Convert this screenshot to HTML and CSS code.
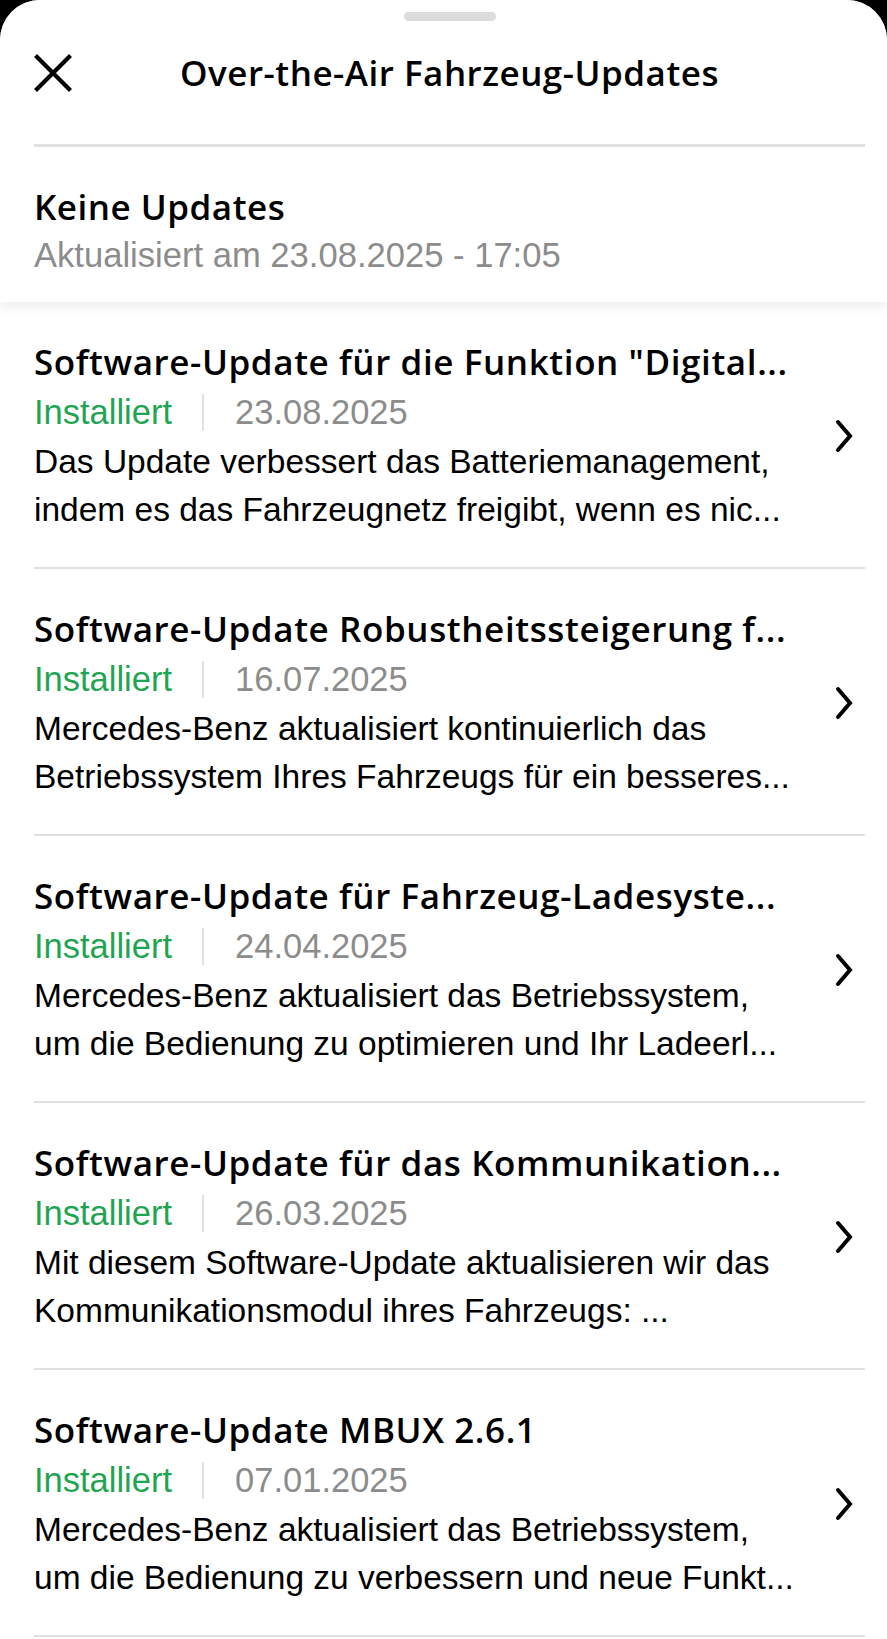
FILE: index.html
```html
<!DOCTYPE html>
<html lang="de">
<head>
<meta charset="utf-8">
<title>Over-the-Air Fahrzeug-Updates</title>
<link rel="stylesheet" href="styles.css">
</head>
<body>
<div class="sheet">
  <header class="header">
    <div class="handle"></div>
    <div class="nav">
      <button class="close" aria-label="Schließen">
        <svg width="38" height="38" viewBox="0 0 38 38"><path d="M3 3 L35 35 M35 3 L3 35" stroke="#000" stroke-width="4.2" stroke-linecap="square" fill="none"/></svg>
      </button>
      <h1 class="nav-title">Over-the-Air Fahrzeug-Updates</h1>
      <span class="nav-spacer"></span>
    </div>
    <div class="divider"></div>
    <div class="status">
      <div class="status-title">Keine Updates</div>
      <div class="status-sub">Aktualisiert am 23.08.2025 - 17:05</div>
    </div>
  </header>

  <ul class="list">
    <li class="item">
      <div class="item-text">
        <div class="item-title">Software-Update für die Funktion "Digital...</div>
        <div class="item-meta"><span class="state">Installiert</span><span class="sep"></span><span class="date">23.08.2025</span></div>
        <div class="item-desc"><span>Das Update verbessert das Batteriemanagement,</span><span>indem es das Fahrzeugnetz freigibt, wenn es nic...</span></div>
      </div>
      <svg class="chev" width="18" height="34" viewBox="0 0 18 34"><path d="M3 3 L15 17 L3 31" stroke="#000" stroke-width="4" fill="none" stroke-linecap="round" stroke-linejoin="miter"/></svg>
    </li>
    <li class="item">
      <div class="item-text">
        <div class="item-title">Software-Update Robustheitssteigerung f...</div>
        <div class="item-meta"><span class="state">Installiert</span><span class="sep"></span><span class="date">16.07.2025</span></div>
        <div class="item-desc"><span>Mercedes-Benz aktualisiert kontinuierlich das</span><span>Betriebssystem Ihres Fahrzeugs für ein besseres...</span></div>
      </div>
      <svg class="chev" width="18" height="34" viewBox="0 0 18 34"><path d="M3 3 L15 17 L3 31" stroke="#000" stroke-width="4" fill="none" stroke-linecap="round" stroke-linejoin="miter"/></svg>
    </li>
    <li class="item">
      <div class="item-text">
        <div class="item-title">Software-Update für Fahrzeug-Ladesyste...</div>
        <div class="item-meta"><span class="state">Installiert</span><span class="sep"></span><span class="date">24.04.2025</span></div>
        <div class="item-desc"><span>Mercedes-Benz aktualisiert das Betriebssystem,</span><span>um die Bedienung zu optimieren und Ihr Ladeerl...</span></div>
      </div>
      <svg class="chev" width="18" height="34" viewBox="0 0 18 34"><path d="M3 3 L15 17 L3 31" stroke="#000" stroke-width="4" fill="none" stroke-linecap="round" stroke-linejoin="miter"/></svg>
    </li>
    <li class="item">
      <div class="item-text">
        <div class="item-title">Software-Update für das Kommunikation...</div>
        <div class="item-meta"><span class="state">Installiert</span><span class="sep"></span><span class="date">26.03.2025</span></div>
        <div class="item-desc"><span>Mit diesem Software-Update aktualisieren wir das</span><span>Kommunikationsmodul ihres Fahrzeugs: ...</span></div>
      </div>
      <svg class="chev" width="18" height="34" viewBox="0 0 18 34"><path d="M3 3 L15 17 L3 31" stroke="#000" stroke-width="4" fill="none" stroke-linecap="round" stroke-linejoin="miter"/></svg>
    </li>
    <li class="item">
      <div class="item-text">
        <div class="item-title">Software-Update MBUX 2.6.1</div>
        <div class="item-meta"><span class="state">Installiert</span><span class="sep"></span><span class="date">07.01.2025</span></div>
        <div class="item-desc"><span>Mercedes-Benz aktualisiert das Betriebssystem,</span><span>um die Bedienung zu verbessern und neue Funkt...</span></div>
      </div>
      <svg class="chev" width="18" height="34" viewBox="0 0 18 34"><path d="M3 3 L15 17 L3 31" stroke="#000" stroke-width="4" fill="none" stroke-linecap="round" stroke-linejoin="miter"/></svg>
    </li>
  </ul>
</div>
</body>
</html>
```

FILE: styles.css
```css
* { box-sizing: border-box; }
html, body { margin: 0; padding: 0; }
body {
  background: #000;
  font-family: "Liberation Sans", Arial, sans-serif;
  color: #000;
  width: 887px;
  height: 1639px;
  overflow: hidden;
}
.sheet {
  background: #fff;
  border-radius: 40px 40px 0 0;
  min-height: 1639px;
}
.header {
  position: relative;
  z-index: 2;
  background: #fff;
  border-radius: 40px 40px 0 0;
  padding: 12px 22px 22px 34px;
  box-shadow: 0 5px 12px rgba(0, 0, 0, 0.07);
}
.handle {
  width: 92px;
  height: 9px;
  border-radius: 5px;
  background: #dcdcdc;
  margin: 0 auto;
}
.nav {
  display: flex;
  align-items: center;
  height: 74px;
  margin-top: 15px;
}
.close {
  width: 38px;
  height: 38px;
  padding: 0;
  border: 0;
  background: none;
  display: flex;
}
.nav-title {
  flex: 1;
  margin: 0;
  text-align: center;
  font-family: "Open Sans", "Liberation Sans", sans-serif;
  font-weight: 560;
  font-size: 35px;
  line-height: 40px;
  letter-spacing: 0.5px;
}
.nav-spacer { width: 38px; }
.divider {
  height: 3px;
  background: #e0e0e0;
  margin-top: 34px;
}
.status { padding-top: 35px; }
.status-title {
  font-family: "Open Sans", "Liberation Sans", sans-serif;
  font-weight: 560;
  font-size: 35px;
  line-height: 49px;
  letter-spacing: 0.5px;
}
.status-sub {
  font-size: 34.6px;
  line-height: 49px;
  color: #8c8c8c;
}
.list {
  list-style: none;
  margin: 0;
  padding: 0 22px 0 34px;
}
.item {
  display: flex;
  align-items: center;
  padding: 35px 12px 33px 0;
  border-bottom: 2px solid #e0e0e0;
}
.item-text { flex: 1; min-width: 0; }
.item-title {
  font-family: "Open Sans", "Liberation Sans", sans-serif;
  font-weight: 560;
  font-size: 35px;
  line-height: 50px;
  white-space: nowrap;
  letter-spacing: 0.6px;
}
.item-meta {
  display: flex;
  align-items: center;
  font-size: 34.5px;
  line-height: 51px;
}
.state { color: #1fa552; }
.sep {
  width: 2px;
  height: 37px;
  background: #e2e2e2;
  margin: 0 31px 0 30px;
}
.date { color: #8c8c8c; }
.item-desc {
  font-size: 33.5px;
  line-height: 48px;
}
.item-desc span { display: block; white-space: nowrap; }
.chev { flex: none; }
```
